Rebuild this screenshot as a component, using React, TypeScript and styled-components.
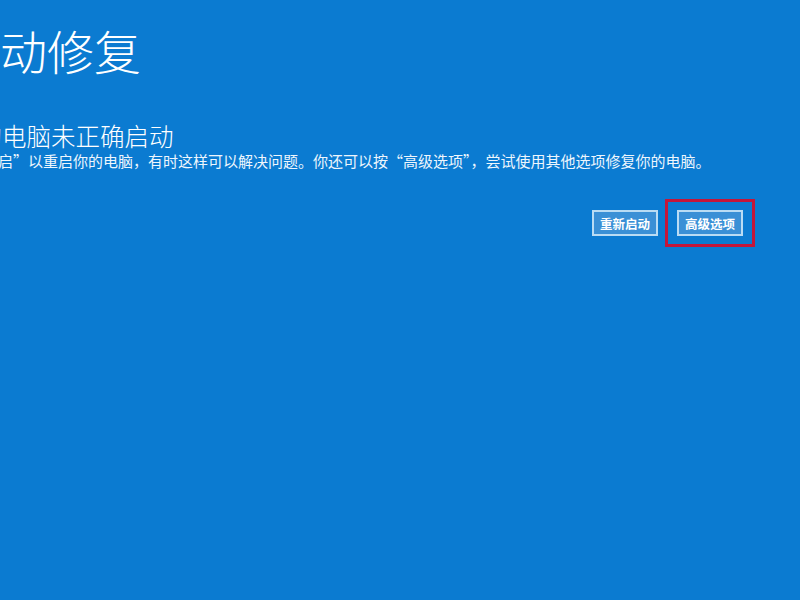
import React from 'react';
import styled, { createGlobalStyle } from 'styled-components';

const GlobalStyle = createGlobalStyle`
  html, body {
    margin: 0;
    padding: 0;
    background: #0b7bd1;
  }
  body {
    font-family: "Noto Sans CJK SC", "Noto Sans", sans-serif;
    color: #ffffff;
  }
`;

const Screen = styled.div`
  width: 800px;
  height: 600px;
  overflow: hidden;
  background: #0b7bd1;
  box-sizing: border-box;
  padding-top: 22px;
`;

// the capture is cropped on the left, so the content starts off-screen
const Content = styled.div`
  margin-left: -47px;
  width: 802px;
  display: flex;
  flex-direction: column;
`;

const Title = styled.h1`
  margin: 0;
  font-size: 47px;
  line-height: 56px;
  font-weight: 300;
  white-space: nowrap;
`;

const Heading = styled.h2`
  margin: 43px 0 0;
  font-size: 24.5px;
  line-height: 30px;
  font-weight: 300;
  white-space: nowrap;
`;

const Message = styled.p`
  margin: 0;
  font-size: 15px;
  line-height: 20px;
  white-space: nowrap;
  color: #eef6fd;
`;

const ButtonRow = styled.div`
  margin-top: 28px;
  display: flex;
  justify-content: flex-end;
  align-items: center;
  gap: 7px;
`;

const Highlight = styled.div`
  border: 3px solid #c4163a;
  padding: 8px 9px;
  display: flex;
`;

const Button = styled.button`
  font-family: "Noto Sans CJK SC", sans-serif;
  font-size: 12.5px;
  font-weight: 700;
  color: #ffffff;
  background: #3a90d6;
  border: 2px solid #b9dcf4;
  height: 26px;
  width: 66px;
  padding: 0;
  display: flex;
  align-items: center;
  justify-content: center;
  cursor: pointer;
`;

export default function App() {
  return (
    <>
      <GlobalStyle />
      <Screen>
        <Content>
          <Title>自动修复</Title>
          <Heading>你的电脑未正确启动</Heading>
          <Message>
            按“重启”以重启你的电脑，有时这样可以解决问题。你还可以按“高级选项”，尝试使用其他选项修复你的电脑。
          </Message>
          <ButtonRow>
            <Button>重新启动</Button>
            <Highlight>
              <Button>高级选项</Button>
            </Highlight>
          </ButtonRow>
        </Content>
      </Screen>
    </>
  );
}
